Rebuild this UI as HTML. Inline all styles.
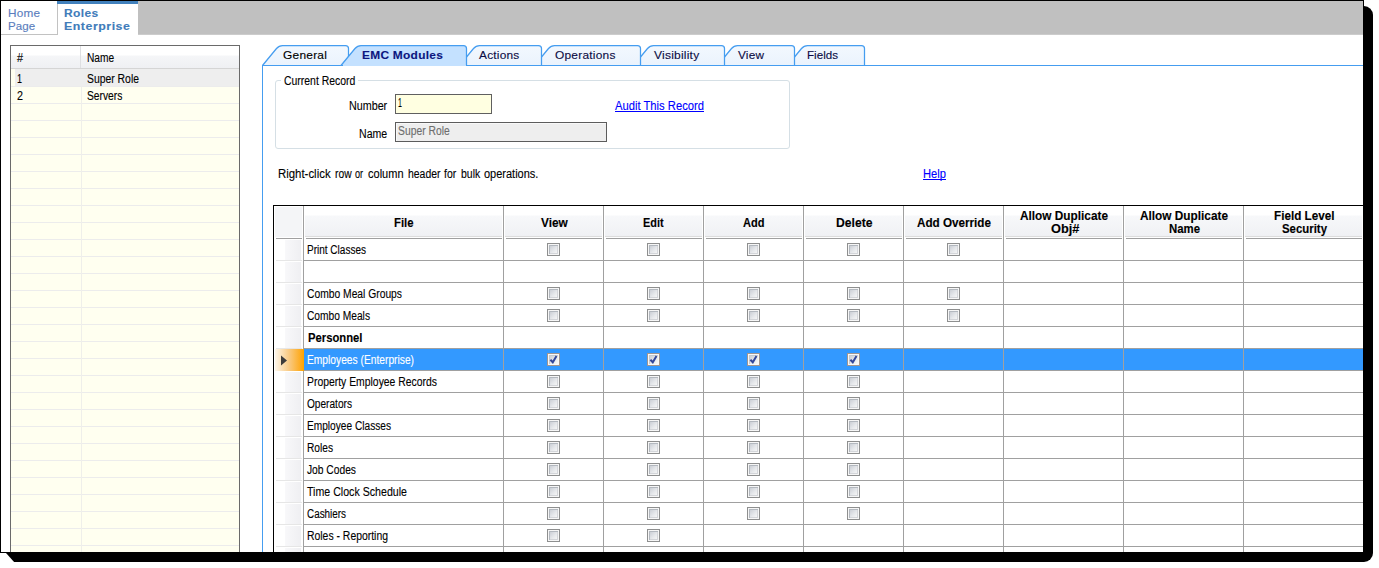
<!DOCTYPE html>
<html><head><meta charset="utf-8"><title>Roles</title>
<style>
html,body{margin:0;padding:0;background:#fff;}
body{width:1379px;height:568px;position:relative;overflow:hidden;font-family:"Liberation Sans", sans-serif;font-size:11px;}
.a{position:absolute;}
.t{position:absolute;white-space:pre;line-height:16px;height:16px;transform-origin:0 0;-webkit-text-stroke:0.12px;}
.cb{position:absolute;width:11px;height:11px;border:1px solid #8e8f8f;background:linear-gradient(135deg,#c9cdd4 15%,#e6e8eb 55%,#f7f7f7 85%);box-shadow:inset 0 0 0 1px #f6f6f6, inset 1px 1px 0 1px #b3b8bf, inset -1px -1px 0 1px #d3d5d9;}
.cbs{position:absolute;width:11px;height:11px;border:1px solid #a0958f;background:linear-gradient(135deg,#c9cdd4 15%,#e6e8eb 55%,#f7f7f7 85%);box-shadow:inset 0 0 0 1px #f8f8f8, inset 1px 1px 0 1px #c4c8ce;}
</style></head><body>

<div class="a" style="left:6px;top:6px;width:1367px;height:556px;background:#000;border-radius:0 9px 9px 0;"></div>
<svg class="a" style="left:0;top:550px" width="20" height="14" viewBox="0 550 20 14"><path d="M0,553 L6,553 L14.5,562.5 L0,562.5 Z" fill="#fff"/></svg>
<div class="a" id="win" style="left:0;top:0;width:1364px;height:553px;background:#000;"></div>
<div class="a" style="left:1px;top:1px;width:1362px;height:551px;background:#fff;overflow:hidden;">
<div class="a" style="left:-1px;top:-1px;width:1379px;height:568px;">
<div class="a" style="left:138px;top:1px;width:1225px;height:33px;background:#c0c0c0;"></div>
<div class="a" style="left:138px;top:34px;width:1225px;height:1px;background:#cccccc;"></div>
<div class="a" style="left:1px;top:34px;width:57px;height:1px;background:#c2c2c2;"></div>
<div class="a" style="left:57px;top:4px;width:1px;height:31px;background:#c2c2c2;"></div>
<div class="a" style="left:57px;top:1px;width:81px;height:3px;background:#4281bd;"></div>
<div class="a" style="left:10px;top:45px;width:228px;height:520px;border:1px solid #6a6a6a;background:#fffff0;"></div>
<div class="a" style="left:11px;top:46px;width:228px;height:22px;background:linear-gradient(#fff 0,#fff 9px,#f5f6f8 10px,#eff0f3 21px);"></div>
<div class="a" style="left:11px;top:68px;width:228px;height:1px;background:#d5d5d5;"></div>
<div class="a" style="left:80px;top:46px;width:1px;height:22px;background:#dedfe2;"></div>
<div class="a" style="left:15px;top:69px;width:224px;height:17px;background:#eeeeee;"></div>
<div class="a" style="left:11px;top:86px;width:228px;height:1px;background:#ececec;"></div>
<div class="a" style="left:11px;top:103px;width:228px;height:1px;background:#ececec;"></div>
<div class="a" style="left:11px;top:120px;width:228px;height:1px;background:#ececec;"></div>
<div class="a" style="left:11px;top:137px;width:228px;height:1px;background:#ececec;"></div>
<div class="a" style="left:11px;top:154px;width:228px;height:1px;background:#ececec;"></div>
<div class="a" style="left:11px;top:171px;width:228px;height:1px;background:#ececec;"></div>
<div class="a" style="left:11px;top:188px;width:228px;height:1px;background:#ececec;"></div>
<div class="a" style="left:11px;top:205px;width:228px;height:1px;background:#ececec;"></div>
<div class="a" style="left:11px;top:222px;width:228px;height:1px;background:#ececec;"></div>
<div class="a" style="left:11px;top:239px;width:228px;height:1px;background:#ececec;"></div>
<div class="a" style="left:11px;top:256px;width:228px;height:1px;background:#ececec;"></div>
<div class="a" style="left:11px;top:273px;width:228px;height:1px;background:#ececec;"></div>
<div class="a" style="left:11px;top:290px;width:228px;height:1px;background:#ececec;"></div>
<div class="a" style="left:11px;top:307px;width:228px;height:1px;background:#ececec;"></div>
<div class="a" style="left:11px;top:324px;width:228px;height:1px;background:#ececec;"></div>
<div class="a" style="left:11px;top:341px;width:228px;height:1px;background:#ececec;"></div>
<div class="a" style="left:11px;top:358px;width:228px;height:1px;background:#ececec;"></div>
<div class="a" style="left:11px;top:375px;width:228px;height:1px;background:#ececec;"></div>
<div class="a" style="left:11px;top:392px;width:228px;height:1px;background:#ececec;"></div>
<div class="a" style="left:11px;top:409px;width:228px;height:1px;background:#ececec;"></div>
<div class="a" style="left:11px;top:426px;width:228px;height:1px;background:#ececec;"></div>
<div class="a" style="left:11px;top:443px;width:228px;height:1px;background:#ececec;"></div>
<div class="a" style="left:11px;top:460px;width:228px;height:1px;background:#ececec;"></div>
<div class="a" style="left:11px;top:477px;width:228px;height:1px;background:#ececec;"></div>
<div class="a" style="left:11px;top:494px;width:228px;height:1px;background:#ececec;"></div>
<div class="a" style="left:11px;top:511px;width:228px;height:1px;background:#ececec;"></div>
<div class="a" style="left:11px;top:528px;width:228px;height:1px;background:#ececec;"></div>
<div class="a" style="left:11px;top:545px;width:228px;height:1px;background:#ececec;"></div>
<div class="a" style="left:81px;top:87px;width:1px;height:480px;background:#efefea;"></div>
<div class="a" style="left:262px;top:65px;width:1110px;height:520px;border-left:1px solid #459df0;border-top:1px solid #459df0;"></div>
<svg class="a" style="left:0;top:0" width="1379" height="80" viewBox="0 0 1379 80"><defs><linearGradient id="tg" x1="0" y1="0" x2="0" y2="1"><stop offset="0" stop-color="#f3f8fe"/><stop offset="1" stop-color="#eaf3fd"/></linearGradient></defs><path d="M787.5,65.5 L801.5,48.5 Q804,45.5 807.5,45.5 L861.5,45.5 Q864.5,45.5 864.5,48.5 L864.5,65.5 Z" fill="url(#tg)" stroke="none"/><path d="M787.5,65.5 L801.5,48.5 Q804,45.5 807.5,45.5 L861.5,45.5 Q864.5,45.5 864.5,48.5 L864.5,65.5" fill="none" stroke="#459df0" stroke-width="1.25"/><path d="M717.5,65.5 L731.5,48.5 Q734,45.5 737.5,45.5 L791.5,45.5 Q794.5,45.5 794.5,48.5 L794.5,65.5 Z" fill="url(#tg)" stroke="none"/><path d="M717.5,65.5 L731.5,48.5 Q734,45.5 737.5,45.5 L791.5,45.5 Q794.5,45.5 794.5,48.5 L794.5,65.5" fill="none" stroke="#459df0" stroke-width="1.25"/><path d="M633.5,65.5 L647.5,48.5 Q650,45.5 653.5,45.5 L721.5,45.5 Q724.5,45.5 724.5,48.5 L724.5,65.5 Z" fill="url(#tg)" stroke="none"/><path d="M633.5,65.5 L647.5,48.5 Q650,45.5 653.5,45.5 L721.5,45.5 Q724.5,45.5 724.5,48.5 L724.5,65.5" fill="none" stroke="#459df0" stroke-width="1.25"/><path d="M534.5,65.5 L548.5,48.5 Q551,45.5 554.5,45.5 L637.5,45.5 Q640.5,45.5 640.5,48.5 L640.5,65.5 Z" fill="url(#tg)" stroke="none"/><path d="M534.5,65.5 L548.5,48.5 Q551,45.5 554.5,45.5 L637.5,45.5 Q640.5,45.5 640.5,48.5 L640.5,65.5" fill="none" stroke="#459df0" stroke-width="1.25"/><path d="M459.5,65.5 L473.5,48.5 Q476,45.5 479.5,45.5 L538.5,45.5 Q541.5,45.5 541.5,48.5 L541.5,65.5 Z" fill="url(#tg)" stroke="none"/><path d="M459.5,65.5 L473.5,48.5 Q476,45.5 479.5,45.5 L538.5,45.5 Q541.5,45.5 541.5,48.5 L541.5,65.5" fill="none" stroke="#459df0" stroke-width="1.25"/><path d="M262.5,65.5 L276.5,48.5 Q279,45.5 282.5,45.5 L345.5,45.5 Q348.5,45.5 348.5,48.5 L348.5,65.5 Z" fill="url(#tg)" stroke="none"/><path d="M262.5,65.5 L276.5,48.5 Q279,45.5 282.5,45.5 L345.5,45.5 Q348.5,45.5 348.5,48.5 L348.5,65.5" fill="none" stroke="#459df0" stroke-width="1.25"/><path d="M341.0,65.5 L355.0,48.5 Q357.5,45.5 361.0,45.5 L463.5,45.5 Q466.5,45.5 466.5,48.5 L466.5,65.5 Z" fill="#c4e1ff" stroke="none"/><path d="M341.0,65.5 L355.0,48.5 Q357.5,45.5 361.0,45.5 L463.5,45.5 Q466.5,45.5 466.5,48.5 L466.5,65.5" fill="none" stroke="#459df0" stroke-width="1.25"/><rect x="262" y="65" width="1110" height="1" fill="#459df0"/><rect x="343" y="65" width="123" height="1" fill="#c4e1ff"/></svg>
<div class="a" style="left:275px;top:80px;width:513px;height:67px;border:1px solid #d5dfe5;border-radius:3px;"></div>
<div class="a" style="left:281px;top:78px;width:77px;height:5px;background:#fff;"></div>
<div class="a" style="left:395px;top:94px;width:95px;height:18px;border:1px solid #606060;background:#ffffe1;"></div>
<div class="a" style="left:395px;top:122px;width:210px;height:18px;border:1px solid #5c5c5c;background:#eeeeee;box-shadow:inset 1px 1px 0 #f8f8f8;"></div>
<div class="a" style="left:273px;top:205px;width:1100px;height:1px;background:#000;"></div>
<div class="a" style="left:273px;top:205px;width:1px;height:360px;background:#000;"></div>
<div class="a" style="left:275px;top:207px;width:27px;height:30px;background:#f4f5f7;"></div>
<div class="a" style="left:276px;top:238px;width:26px;height:1px;background:#a0a0a0;"></div>
<div class="a" style="left:305px;top:206px;width:197px;height:30px;background:linear-gradient(#fff 0,#fff 9px,#f7f8fa 10px,#f0f1f4 30px);"></div>
<div class="a" style="left:305px;top:236px;width:197px;height:1px;background:#dcdcdc;"></div>
<div class="a" style="left:306px;top:238px;width:196px;height:1px;background:#a0a0a0;"></div>
<div class="a" style="left:505px;top:206px;width:97px;height:30px;background:linear-gradient(#fff 0,#fff 9px,#f7f8fa 10px,#f0f1f4 30px);"></div>
<div class="a" style="left:505px;top:236px;width:97px;height:1px;background:#dcdcdc;"></div>
<div class="a" style="left:506px;top:238px;width:96px;height:1px;background:#a0a0a0;"></div>
<div class="a" style="left:605px;top:206px;width:97px;height:30px;background:linear-gradient(#fff 0,#fff 9px,#f7f8fa 10px,#f0f1f4 30px);"></div>
<div class="a" style="left:605px;top:236px;width:97px;height:1px;background:#dcdcdc;"></div>
<div class="a" style="left:606px;top:238px;width:96px;height:1px;background:#a0a0a0;"></div>
<div class="a" style="left:705px;top:206px;width:97px;height:30px;background:linear-gradient(#fff 0,#fff 9px,#f7f8fa 10px,#f0f1f4 30px);"></div>
<div class="a" style="left:705px;top:236px;width:97px;height:1px;background:#dcdcdc;"></div>
<div class="a" style="left:706px;top:238px;width:96px;height:1px;background:#a0a0a0;"></div>
<div class="a" style="left:805px;top:206px;width:97px;height:30px;background:linear-gradient(#fff 0,#fff 9px,#f7f8fa 10px,#f0f1f4 30px);"></div>
<div class="a" style="left:805px;top:236px;width:97px;height:1px;background:#dcdcdc;"></div>
<div class="a" style="left:806px;top:238px;width:96px;height:1px;background:#a0a0a0;"></div>
<div class="a" style="left:905px;top:206px;width:97px;height:30px;background:linear-gradient(#fff 0,#fff 9px,#f7f8fa 10px,#f0f1f4 30px);"></div>
<div class="a" style="left:905px;top:236px;width:97px;height:1px;background:#dcdcdc;"></div>
<div class="a" style="left:906px;top:238px;width:96px;height:1px;background:#a0a0a0;"></div>
<div class="a" style="left:1005px;top:206px;width:117px;height:30px;background:linear-gradient(#fff 0,#fff 9px,#f7f8fa 10px,#f0f1f4 30px);"></div>
<div class="a" style="left:1005px;top:236px;width:117px;height:1px;background:#dcdcdc;"></div>
<div class="a" style="left:1006px;top:238px;width:116px;height:1px;background:#a0a0a0;"></div>
<div class="a" style="left:1125px;top:206px;width:117px;height:30px;background:linear-gradient(#fff 0,#fff 9px,#f7f8fa 10px,#f0f1f4 30px);"></div>
<div class="a" style="left:1125px;top:236px;width:117px;height:1px;background:#dcdcdc;"></div>
<div class="a" style="left:1126px;top:238px;width:116px;height:1px;background:#a0a0a0;"></div>
<div class="a" style="left:1245px;top:206px;width:117px;height:30px;background:linear-gradient(#fff 0,#fff 9px,#f7f8fa 10px,#f0f1f4 30px);"></div>
<div class="a" style="left:1245px;top:236px;width:117px;height:1px;background:#dcdcdc;"></div>
<div class="a" style="left:1246px;top:238px;width:116px;height:1px;background:#a0a0a0;"></div>
<div class="a" style="left:285px;top:240px;width:16px;height:20px;background:linear-gradient(90deg,#f8f8fa,#efeff2);"></div>
<div class="a" style="left:276px;top:260px;width:26px;height:1px;background:#e6e6e6;"></div>
<div class="a" style="left:285px;top:262px;width:16px;height:20px;background:linear-gradient(90deg,#f8f8fa,#efeff2);"></div>
<div class="a" style="left:276px;top:282px;width:26px;height:1px;background:#e6e6e6;"></div>
<div class="a" style="left:285px;top:284px;width:16px;height:20px;background:linear-gradient(90deg,#f8f8fa,#efeff2);"></div>
<div class="a" style="left:276px;top:304px;width:26px;height:1px;background:#e6e6e6;"></div>
<div class="a" style="left:285px;top:306px;width:16px;height:20px;background:linear-gradient(90deg,#f8f8fa,#efeff2);"></div>
<div class="a" style="left:276px;top:326px;width:26px;height:1px;background:#e6e6e6;"></div>
<div class="a" style="left:285px;top:328px;width:16px;height:20px;background:linear-gradient(90deg,#f8f8fa,#efeff2);"></div>
<div class="a" style="left:276px;top:348px;width:26px;height:1px;background:#e6e6e6;"></div>
<div class="a" style="left:275px;top:349px;width:29px;height:22px;background:linear-gradient(90deg,#fdf6ea 0,#f9c980 50%,#ffa200 100%);"></div>
<div class="a" style="left:304px;top:349px;width:1060px;height:21px;background:#3399ff;"></div>
<svg class="a" style="left:280px;top:355px" width="8" height="11" viewBox="0 0 8 11"><path d="M1,0.5 L7,5.5 L1,10.5 Z" fill="#3c3c3c"/></svg>
<div class="a" style="left:285px;top:372px;width:16px;height:20px;background:linear-gradient(90deg,#f8f8fa,#efeff2);"></div>
<div class="a" style="left:276px;top:392px;width:26px;height:1px;background:#e6e6e6;"></div>
<div class="a" style="left:285px;top:394px;width:16px;height:20px;background:linear-gradient(90deg,#f8f8fa,#efeff2);"></div>
<div class="a" style="left:276px;top:414px;width:26px;height:1px;background:#e6e6e6;"></div>
<div class="a" style="left:285px;top:416px;width:16px;height:20px;background:linear-gradient(90deg,#f8f8fa,#efeff2);"></div>
<div class="a" style="left:276px;top:436px;width:26px;height:1px;background:#e6e6e6;"></div>
<div class="a" style="left:285px;top:438px;width:16px;height:20px;background:linear-gradient(90deg,#f8f8fa,#efeff2);"></div>
<div class="a" style="left:276px;top:458px;width:26px;height:1px;background:#e6e6e6;"></div>
<div class="a" style="left:285px;top:460px;width:16px;height:20px;background:linear-gradient(90deg,#f8f8fa,#efeff2);"></div>
<div class="a" style="left:276px;top:480px;width:26px;height:1px;background:#e6e6e6;"></div>
<div class="a" style="left:285px;top:482px;width:16px;height:20px;background:linear-gradient(90deg,#f8f8fa,#efeff2);"></div>
<div class="a" style="left:276px;top:502px;width:26px;height:1px;background:#e6e6e6;"></div>
<div class="a" style="left:285px;top:504px;width:16px;height:20px;background:linear-gradient(90deg,#f8f8fa,#efeff2);"></div>
<div class="a" style="left:276px;top:524px;width:26px;height:1px;background:#e6e6e6;"></div>
<div class="a" style="left:285px;top:526px;width:16px;height:20px;background:linear-gradient(90deg,#f8f8fa,#efeff2);"></div>
<div class="a" style="left:276px;top:546px;width:26px;height:1px;background:#e6e6e6;"></div>
<div class="a" style="left:285px;top:548px;width:16px;height:20px;background:linear-gradient(90deg,#f8f8fa,#efeff2);"></div>
<div class="a" style="left:276px;top:568px;width:26px;height:1px;background:#e6e6e6;"></div>
<div class="a" style="left:303px;top:260px;width:1061px;height:1px;background:#a0a0a0;"></div>
<div class="a" style="left:303px;top:282px;width:1061px;height:1px;background:#a0a0a0;"></div>
<div class="a" style="left:303px;top:304px;width:1061px;height:1px;background:#a0a0a0;"></div>
<div class="a" style="left:303px;top:326px;width:1061px;height:1px;background:#a0a0a0;"></div>
<div class="a" style="left:303px;top:348px;width:1061px;height:1px;background:#a0a0a0;"></div>
<div class="a" style="left:303px;top:370px;width:1061px;height:1px;background:#a0a0a0;"></div>
<div class="a" style="left:303px;top:392px;width:1061px;height:1px;background:#a0a0a0;"></div>
<div class="a" style="left:303px;top:414px;width:1061px;height:1px;background:#a0a0a0;"></div>
<div class="a" style="left:303px;top:436px;width:1061px;height:1px;background:#a0a0a0;"></div>
<div class="a" style="left:303px;top:458px;width:1061px;height:1px;background:#a0a0a0;"></div>
<div class="a" style="left:303px;top:480px;width:1061px;height:1px;background:#a0a0a0;"></div>
<div class="a" style="left:303px;top:502px;width:1061px;height:1px;background:#a0a0a0;"></div>
<div class="a" style="left:303px;top:524px;width:1061px;height:1px;background:#a0a0a0;"></div>
<div class="a" style="left:303px;top:546px;width:1061px;height:1px;background:#a0a0a0;"></div>
<div class="a" style="left:303px;top:568px;width:1061px;height:1px;background:#a0a0a0;"></div>
<div class="a" style="left:303px;top:206px;width:1px;height:362px;background:#a0a0a0;"></div>
<div class="a" style="left:503px;top:206px;width:1px;height:362px;background:#a0a0a0;"></div>
<div class="a" style="left:603px;top:206px;width:1px;height:362px;background:#a0a0a0;"></div>
<div class="a" style="left:703px;top:206px;width:1px;height:362px;background:#a0a0a0;"></div>
<div class="a" style="left:803px;top:206px;width:1px;height:362px;background:#a0a0a0;"></div>
<div class="a" style="left:903px;top:206px;width:1px;height:362px;background:#a0a0a0;"></div>
<div class="a" style="left:1003px;top:206px;width:1px;height:362px;background:#a0a0a0;"></div>
<div class="a" style="left:1123px;top:206px;width:1px;height:362px;background:#a0a0a0;"></div>
<div class="a" style="left:1243px;top:206px;width:1px;height:362px;background:#a0a0a0;"></div>
<div class="a" style="left:303px;top:349px;width:1px;height:22px;background:#ffa500;"></div>
<div class="cb" style="left:547px;top:243px;"></div>
<div class="cb" style="left:647px;top:243px;"></div>
<div class="cb" style="left:747px;top:243px;"></div>
<div class="cb" style="left:847px;top:243px;"></div>
<div class="cb" style="left:947px;top:243px;"></div>
<div class="cb" style="left:547px;top:287px;"></div>
<div class="cb" style="left:647px;top:287px;"></div>
<div class="cb" style="left:747px;top:287px;"></div>
<div class="cb" style="left:847px;top:287px;"></div>
<div class="cb" style="left:947px;top:287px;"></div>
<div class="cb" style="left:547px;top:309px;"></div>
<div class="cb" style="left:647px;top:309px;"></div>
<div class="cb" style="left:747px;top:309px;"></div>
<div class="cb" style="left:847px;top:309px;"></div>
<div class="cb" style="left:947px;top:309px;"></div>
<div class="cbs" style="left:547px;top:353px;"></div>
<svg class="a" style="left:547px;top:353px" width="13" height="13" viewBox="0 0 13 13"><path d="M3.4,6.7 L5.8,9.3 L9.5,3.1" fill="none" stroke="#33479b" stroke-width="2"/></svg>
<div class="cbs" style="left:647px;top:353px;"></div>
<svg class="a" style="left:647px;top:353px" width="13" height="13" viewBox="0 0 13 13"><path d="M3.4,6.7 L5.8,9.3 L9.5,3.1" fill="none" stroke="#33479b" stroke-width="2"/></svg>
<div class="cbs" style="left:747px;top:353px;"></div>
<svg class="a" style="left:747px;top:353px" width="13" height="13" viewBox="0 0 13 13"><path d="M3.4,6.7 L5.8,9.3 L9.5,3.1" fill="none" stroke="#33479b" stroke-width="2"/></svg>
<div class="cbs" style="left:847px;top:353px;"></div>
<svg class="a" style="left:847px;top:353px" width="13" height="13" viewBox="0 0 13 13"><path d="M3.4,6.7 L5.8,9.3 L9.5,3.1" fill="none" stroke="#33479b" stroke-width="2"/></svg>
<div class="cb" style="left:547px;top:375px;"></div>
<div class="cb" style="left:647px;top:375px;"></div>
<div class="cb" style="left:747px;top:375px;"></div>
<div class="cb" style="left:847px;top:375px;"></div>
<div class="cb" style="left:547px;top:397px;"></div>
<div class="cb" style="left:647px;top:397px;"></div>
<div class="cb" style="left:747px;top:397px;"></div>
<div class="cb" style="left:847px;top:397px;"></div>
<div class="cb" style="left:547px;top:419px;"></div>
<div class="cb" style="left:647px;top:419px;"></div>
<div class="cb" style="left:747px;top:419px;"></div>
<div class="cb" style="left:847px;top:419px;"></div>
<div class="cb" style="left:547px;top:441px;"></div>
<div class="cb" style="left:647px;top:441px;"></div>
<div class="cb" style="left:747px;top:441px;"></div>
<div class="cb" style="left:847px;top:441px;"></div>
<div class="cb" style="left:547px;top:463px;"></div>
<div class="cb" style="left:647px;top:463px;"></div>
<div class="cb" style="left:747px;top:463px;"></div>
<div class="cb" style="left:847px;top:463px;"></div>
<div class="cb" style="left:547px;top:485px;"></div>
<div class="cb" style="left:647px;top:485px;"></div>
<div class="cb" style="left:747px;top:485px;"></div>
<div class="cb" style="left:847px;top:485px;"></div>
<div class="cb" style="left:547px;top:507px;"></div>
<div class="cb" style="left:647px;top:507px;"></div>
<div class="cb" style="left:747px;top:507px;"></div>
<div class="cb" style="left:847px;top:507px;"></div>
<div class="cb" style="left:547px;top:529px;"></div>
<div class="cb" style="left:647px;top:529px;"></div>
<div class="t" style="left:8.30px;top:5.02px;font-size:11.5px;font-weight:normal;color:#5a7dbd;letter-spacing:0.216px;transform:scaleX(1.0212);">Home</div>
<div class="t" style="left:8.30px;top:18.02px;font-size:11.5px;font-weight:normal;color:#5a7dbd;letter-spacing:0.040px;transform:scaleX(1.0045);">Page</div>
<div class="t" style="left:64.40px;top:5.02px;font-size:11.5px;font-weight:bold;color:#3f7cba;letter-spacing:0.339px;transform:scaleX(1.0433);">Roles</div>
<div class="t" style="left:64.40px;top:18.02px;font-size:11.5px;font-weight:bold;color:#3f7cba;letter-spacing:0.482px;transform:scaleX(1.0763);">Enterprise</div>
<div class="t" style="left:17.00px;top:49.67px;font-size:12.5px;font-weight:normal;color:#000;transform:scaleX(0.8629);">#</div>
<div class="t" style="left:87.00px;top:49.67px;font-size:12.5px;font-weight:normal;color:#000;transform:scaleX(0.8157);">Name</div>
<div class="t" style="left:17.00px;top:70.67px;font-size:12.5px;font-weight:normal;color:#000;transform:scaleX(0.7191);">1</div>
<div class="t" style="left:87.00px;top:70.67px;font-size:12.5px;font-weight:normal;color:#000;transform:scaleX(0.8314);">Super Role</div>
<div class="t" style="left:17.00px;top:87.67px;font-size:12.5px;font-weight:normal;color:#000;transform:scaleX(0.8629);">2</div>
<div class="t" style="left:87.00px;top:87.67px;font-size:12.5px;font-weight:normal;color:#000;transform:scaleX(0.8218);">Servers</div>
<div class="t" style="left:282.70px;top:47.02px;font-size:11.5px;font-weight:normal;color:#000;letter-spacing:0.244px;transform:scaleX(1.0357);">General</div>
<div class="t" style="left:361.60px;top:47.02px;font-size:11.5px;font-weight:bold;color:#0c1680;letter-spacing:0.266px;transform:scaleX(1.0353);">EMC Modules</div>
<div class="t" style="left:479.00px;top:47.02px;font-size:11.5px;font-weight:normal;color:#0c0c44;letter-spacing:0.203px;transform:scaleX(1.0324);">Actions</div>
<div class="t" style="left:554.60px;top:47.02px;font-size:11.5px;font-weight:normal;color:#0c0c44;letter-spacing:0.226px;transform:scaleX(1.0361);">Operations</div>
<div class="t" style="left:653.60px;top:47.02px;font-size:11.5px;font-weight:normal;color:#0c0c44;letter-spacing:0.210px;transform:scaleX(1.0458);">Visibility</div>
<div class="t" style="left:737.60px;top:47.02px;font-size:11.5px;font-weight:normal;color:#0c0c44;letter-spacing:0.195px;transform:scaleX(1.0236);">View</div>
<div class="t" style="left:807.40px;top:47.02px;font-size:11.5px;font-weight:normal;color:#0c0c44;letter-spacing:0.031px;transform:scaleX(1.0051);">Fields</div>
<div class="t" style="left:283.60px;top:72.67px;font-size:12.5px;font-weight:normal;color:#000;transform:scaleX(0.8355);">Current Record</div>
<div class="t" style="left:348.60px;top:97.67px;font-size:12.5px;font-weight:normal;color:#000;transform:scaleX(0.8590);">Number</div>
<div class="t" style="left:358.60px;top:125.67px;font-size:12.5px;font-weight:normal;color:#000;transform:scaleX(0.8457);">Name</div>
<div class="t" style="left:397.90px;top:94.67px;font-size:12.5px;font-weight:normal;color:#000;transform:scaleX(0.5609);">1</div>
<div class="t" style="left:397.50px;top:122.67px;font-size:12.5px;font-weight:normal;color:#6d6d6d;transform:scaleX(0.8266);">Super Role</div>
<div class="t" style="left:615.00px;top:97.67px;font-size:12.5px;font-weight:normal;color:#0000ff;transform:scaleX(0.8979);text-decoration:underline;text-decoration-skip-ink:none;">Audit This Record</div>
<div class="t" style="left:277.70px;top:165.67px;font-size:12.5px;font-weight:normal;color:#000;transform:scaleX(0.9123);">Right-click</div>
<div class="t" style="left:334.60px;top:165.67px;font-size:12.5px;font-weight:normal;color:#000;transform:scaleX(0.8236);">row</div>
<div class="t" style="left:355.30px;top:165.67px;font-size:12.5px;font-weight:normal;color:#000;transform:scaleX(0.7281);">or</div>
<div class="t" style="left:368.10px;top:165.67px;font-size:12.5px;font-weight:normal;color:#000;transform:scaleX(0.8810);">column</div>
<div class="t" style="left:407.70px;top:165.67px;font-size:12.5px;font-weight:normal;color:#000;transform:scaleX(0.8347);">header</div>
<div class="t" style="left:444.20px;top:165.67px;font-size:12.5px;font-weight:normal;color:#000;transform:scaleX(0.8360);">for</div>
<div class="t" style="left:460.50px;top:165.67px;font-size:12.5px;font-weight:normal;color:#000;transform:scaleX(0.8371);">bulk</div>
<div class="t" style="left:484.20px;top:165.67px;font-size:12.5px;font-weight:normal;color:#000;transform:scaleX(0.8794);">operations.</div>
<div class="t" style="left:923.00px;top:165.67px;font-size:12.5px;font-weight:normal;color:#0000ff;transform:scaleX(0.8943);text-decoration:underline;text-decoration-skip-ink:none;">Help</div>
<div class="t" style="left:394.25px;top:214.67px;font-size:12.5px;font-weight:bold;color:#000;transform:scaleX(0.9050);">File</div>
<div class="t" style="left:541.00px;top:214.67px;font-size:12.5px;font-weight:bold;color:#000;transform:scaleX(0.9481);">View</div>
<div class="t" style="left:643.20px;top:214.67px;font-size:12.5px;font-weight:bold;color:#000;transform:scaleX(0.8725);">Edit</div>
<div class="t" style="left:743.15px;top:214.67px;font-size:12.5px;font-weight:bold;color:#000;transform:scaleX(0.8843);">Add</div>
<div class="t" style="left:836.25px;top:214.67px;font-size:12.5px;font-weight:bold;color:#000;transform:scaleX(0.9725);">Delete</div>
<div class="t" style="left:916.90px;top:214.67px;font-size:12.5px;font-weight:bold;color:#000;transform:scaleX(0.9345);">Add Override</div>
<div class="t" style="left:1020.00px;top:207.67px;font-size:12.5px;font-weight:bold;color:#000;transform:scaleX(0.9454);">Allow Duplicate</div>
<div class="t" style="left:1050.50px;top:220.67px;font-size:12.5px;font-weight:bold;color:#000;transform:scaleX(1.0217);">Obj#</div>
<div class="t" style="left:1140.00px;top:207.67px;font-size:12.5px;font-weight:bold;color:#000;transform:scaleX(0.9454);">Allow Duplicate</div>
<div class="t" style="left:1169.20px;top:220.67px;font-size:12.5px;font-weight:bold;color:#000;transform:scaleX(0.9105);">Name</div>
<div class="t" style="left:1273.65px;top:207.67px;font-size:12.5px;font-weight:bold;color:#000;transform:scaleX(0.9364);">Field Level</div>
<div class="t" style="left:1281.50px;top:220.67px;font-size:12.5px;font-weight:bold;color:#000;transform:scaleX(0.9120);">Security</div>
<div class="t" style="left:307.00px;top:241.67px;font-size:12.5px;font-weight:normal;color:#000;transform:scaleX(0.8012);">Print Classes</div>
<div class="t" style="left:307.00px;top:285.67px;font-size:12.5px;font-weight:normal;color:#000;transform:scaleX(0.8237);">Combo Meal Groups</div>
<div class="t" style="left:307.00px;top:307.67px;font-size:12.5px;font-weight:normal;color:#000;transform:scaleX(0.8169);">Combo Meals</div>
<div class="t" style="left:307.50px;top:329.67px;font-size:12.5px;font-weight:bold;color:#000;transform:scaleX(0.9018);">Personnel</div>
<div class="t" style="left:307.00px;top:351.67px;font-size:12.5px;font-weight:normal;color:#fff;transform:scaleX(0.8192);">Employees (Enterprise)</div>
<div class="t" style="left:307.00px;top:373.67px;font-size:12.5px;font-weight:normal;color:#000;transform:scaleX(0.8316);">Property Employee Records</div>
<div class="t" style="left:307.00px;top:395.67px;font-size:12.5px;font-weight:normal;color:#000;transform:scaleX(0.8094);">Operators</div>
<div class="t" style="left:307.00px;top:417.67px;font-size:12.5px;font-weight:normal;color:#000;transform:scaleX(0.8115);">Employee Classes</div>
<div class="t" style="left:307.00px;top:439.67px;font-size:12.5px;font-weight:normal;color:#000;transform:scaleX(0.8133);">Roles</div>
<div class="t" style="left:307.00px;top:461.67px;font-size:12.5px;font-weight:normal;color:#000;transform:scaleX(0.8199);">Job Codes</div>
<div class="t" style="left:307.00px;top:483.67px;font-size:12.5px;font-weight:normal;color:#000;transform:scaleX(0.8500);">Time Clock Schedule</div>
<div class="t" style="left:307.00px;top:505.67px;font-size:12.5px;font-weight:normal;color:#000;transform:scaleX(0.7906);">Cashiers</div>
<div class="t" style="left:307.00px;top:527.67px;font-size:12.5px;font-weight:normal;color:#000;transform:scaleX(0.8328);">Roles - Reporting</div>
</div></div>
</body></html>
